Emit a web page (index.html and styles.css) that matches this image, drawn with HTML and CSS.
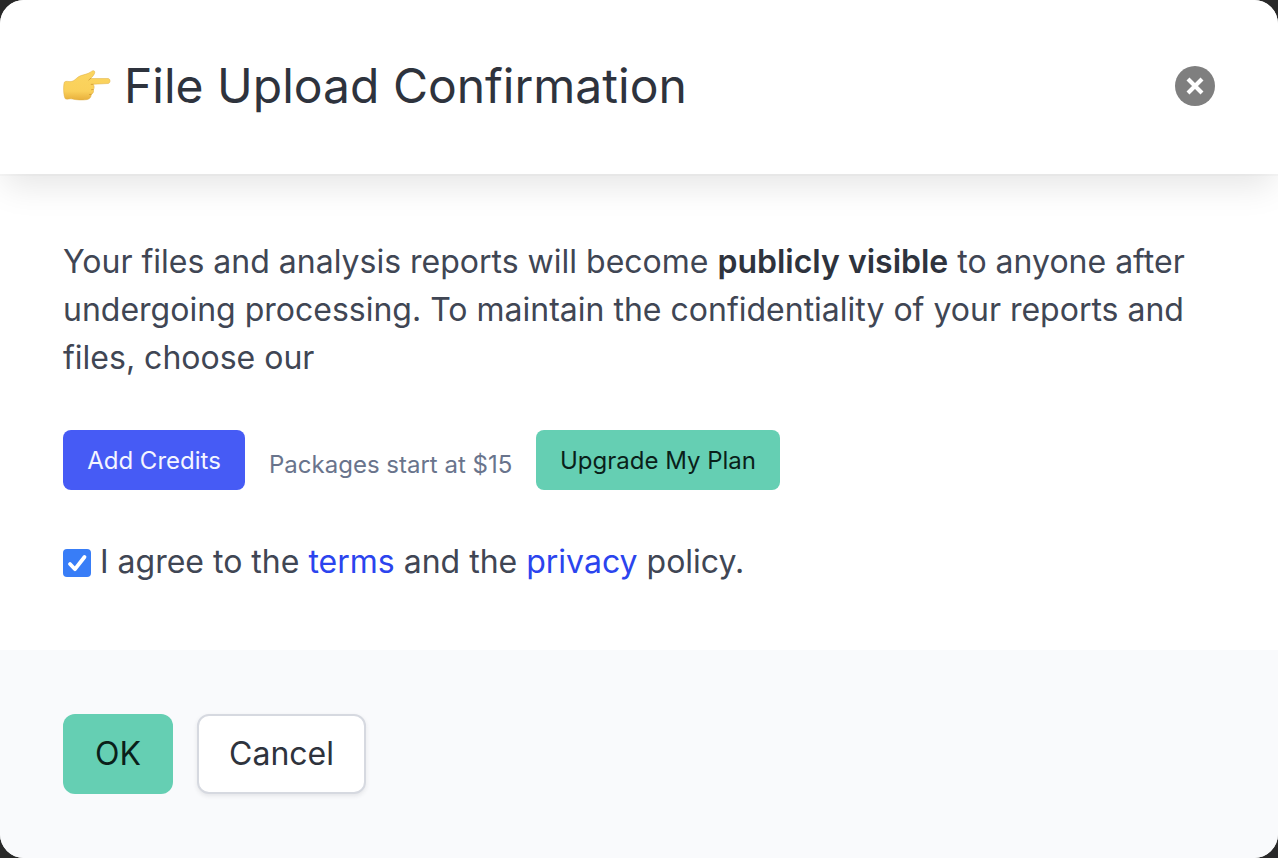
FILE: index.html
```html
<!DOCTYPE html>
<html lang="en">
<head>
<meta charset="utf-8">
<title>File Upload Confirmation</title>
<link rel="stylesheet" href="styles.css">
</head>
<body>
<div class="modal">
  <header class="head">
    <svg class="hand" viewBox="0 0 50 36" aria-hidden="true">
      <defs>
        <linearGradient id="skin" x1="0" y1="0" x2="0" y2="1">
          <stop offset="0" stop-color="#fbd560"/>
          <stop offset=".7" stop-color="#fad05a"/>
          <stop offset="1" stop-color="#e8b03c"/>
        </linearGradient>
      </defs>
      <path fill="url(#skin)" stroke="#dfae42" stroke-width=".5" d="M1.500 14C3 12.600 5.500 13.800 8 13.600C11.500 13.200 13 10.300 15.800 8.600C18.500 7 22.500 6.600 25.300 5.300C27.800 4.100 29.200 2.300 30.700 2.700C32.200 3.100 32 5 30.900 6.700C30.100 8.100 28.900 9.300 27.600 10.500L45 10.500C47.700 10.600 47.700 15.300 45 15.500L30 16.300C31.600 18 31.500 20.300 30.300 21.500C31.200 23.500 30 25.800 28.200 26.400C28.400 29 26.700 30.800 24.500 31.500C20.500 32.300 13 32 9.500 31C6.500 30.200 4.700 31.800 2.300 30.800C.4 28 0 17 1.500 14Z"/>
      <path fill="none" stroke="#cf9834" stroke-width=".8" stroke-linecap="round" d="M27.600 10.500L25.800 12M28.200 16.400L30 16.300M30.300 21.500L28.500 21.700M28.200 26.400L26.500 26.500"/>
    </svg>
    <h1 class="title">File Upload Confirmation</h1>
    <button class="close" aria-label="Close">
      <svg class="close-icon" viewBox="0 0 40 40"><path d="M13 13L27 27M27 13L13 27"/></svg>
    </button>
  </header>
  <main class="body">
    <p class="message">Your files and analysis reports will become <strong>publicly visible</strong> to anyone after<br>undergoing processing. To maintain the confidentiality of your reports and<br>files, choose our</p>
    <div class="offers">
      <button class="small-button credits">Add Credits</button>
      <span class="price">Packages start at $15</span>
      <button class="small-button upgrade">Upgrade My Plan</button>
    </div>
    <label class="agree">
      <span class="check"><svg viewBox="0 0 28 28"><path d="M7 15L12 20.200L21.500 8"/></svg></span>
      <span class="agree-text">I agree to the <a>terms</a> and the <a>privacy</a> policy.</span>
    </label>
  </main>
  <footer class="foot">
    <button class="button ok">OK</button>
    <button class="button cancel">Cancel</button>
  </footer>
</div>
</body>
</html>
```
FILE: styles.css
```css
* { box-sizing: border-box; }
body {
  margin: 0;
  background: #292929;
  font-family: Inter, sans-serif;
  font-size: 32px;
  line-height: 48px;
  color: #404654;
}
button { font-family: inherit; border: 0; padding: 0; white-space: nowrap; }
.modal {
  display: flex;
  flex-direction: column;
  width: 1278px;
  height: 858px;
  overflow: hidden;
  border-radius: 24px;
  background: #fff;
}
.head {
  position: relative;
  display: flex;
  align-items: center;
  height: 174px;
  padding: 0 63px 2px;
  background: #fff;
  box-shadow: 0 16px 32px -4px rgba(10, 10, 10, .1), 0 0 0 2px rgba(10, 10, 10, .02);
}
.hand { width: 50px; height: 36px; flex: none; }
.title {
  margin: 0 auto 0 11px;
  font-size: 48px;
  line-height: 48px;
  font-weight: 400;
  color: #2e333d;
  white-space: nowrap;
}
.close { width: 40px; height: 40px; border-radius: 50%; background: #7f7f7f; }
.close-icon { display: block; fill: none; stroke: #fff; stroke-width: 4.200; }
.body { height: 476px; padding: 64px 63px 0; }
.message { margin: 0; white-space: nowrap; }
.message strong { font-weight: 600; color: #2e333d; }
.offers { display: flex; margin-top: 48px; height: 60px; }
.small-button { height: 60px; border-radius: 8px; font-size: 24px; }
.credits { width: 182px; background: #465bf5; color: #f4f5ff; }
.price { width: 243px; margin: 11px 24px 0; font-size: 24px; color: #69748c; white-space: nowrap; }
.upgrade { width: 244px; background: #65cfb3; color: #0a1f1a; }
.agree { display: flex; align-items: center; margin-top: 48px; white-space: nowrap; }
.check { width: 28px; height: 28px; margin: 2px 9px 0 0; border-radius: 4px; background: #387df7; }
.check svg { display: block; fill: none; stroke: #fff; stroke-width: 3.800; stroke-linecap: round; stroke-linejoin: round; }
.agree a { color: #2b44ee; }
.foot { display: flex; gap: 24px; flex: 1; padding: 64px 63px; background: #f9fafc; }
.button { height: 80px; padding-bottom: 2px; border-radius: 12px; font-size: 32px; }
.ok { width: 110px; background: #65cfb3; color: #0a1f1a; }
.cancel { width: 169px; border: 2px solid #d6d9e0; background: #fff; color: #2e333d; box-shadow: 0 2px 4px rgba(46, 51, 61, .1); }
```
